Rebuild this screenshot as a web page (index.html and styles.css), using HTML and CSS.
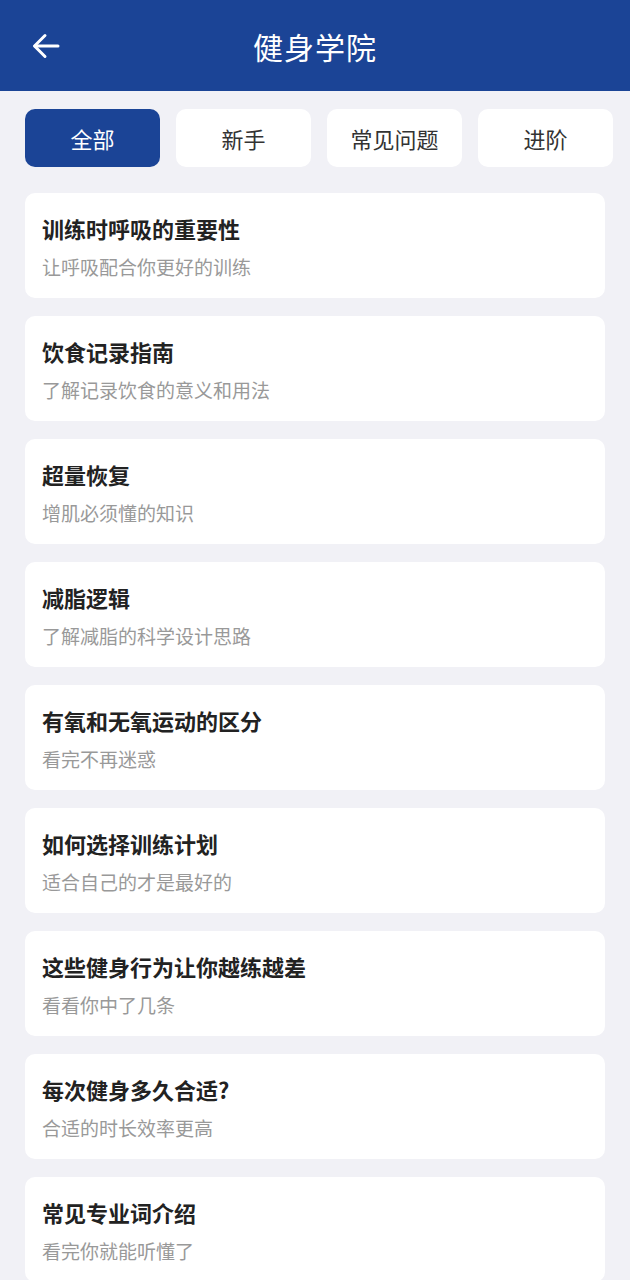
FILE: index.html
```html
<!DOCTYPE html>
<html lang="zh-CN">

<head>
  <meta charset="UTF-8">
  <title>健身学院</title>
  <link rel="stylesheet" href="styles.css">
</head>

<body>
  <header class="top-bar">
    <a class="back-button" href="#">
      <svg width="28" height="28" viewBox="0 0 28 28" fill="none" stroke="#fff" stroke-width="3" stroke-linecap="round" stroke-linejoin="round">
        <path d="M26 14H3"/>
        <path d="M13 3.5L2.5 14L13 24.5"/>
      </svg>
    </a>
    <h1 class="page-title">健身学院</h1>
  </header>

  <nav class="tab-container">
    <button class="tab active">全部</button>
    <button class="tab">新手</button>
    <button class="tab">常见问题</button>
    <button class="tab">进阶</button>
  </nav>

  <div class="article-list">
    <div class="article">
      <div class="article-title">训练时呼吸的重要性</div>
      <div class="article-desc">让呼吸配合你更好的训练</div>
    </div>
    <div class="article">
      <div class="article-title">饮食记录指南</div>
      <div class="article-desc">了解记录饮食的意义和用法</div>
    </div>
    <div class="article">
      <div class="article-title">超量恢复</div>
      <div class="article-desc">增肌必须懂的知识</div>
    </div>
    <div class="article">
      <div class="article-title">减脂逻辑</div>
      <div class="article-desc">了解减脂的科学设计思路</div>
    </div>
    <div class="article">
      <div class="article-title">有氧和无氧运动的区分</div>
      <div class="article-desc">看完不再迷惑</div>
    </div>
    <div class="article">
      <div class="article-title">如何选择训练计划</div>
      <div class="article-desc">适合自己的才是最好的</div>
    </div>
    <div class="article">
      <div class="article-title">这些健身行为让你越练越差</div>
      <div class="article-desc">看看你中了几条</div>
    </div>
    <div class="article">
      <div class="article-title">每次健身多久合适?</div>
      <div class="article-desc">合适的时长效率更高</div>
    </div>
    <div class="article">
      <div class="article-title">常见专业词介绍</div>
      <div class="article-desc">看完你就能听懂了</div>
    </div>
  </div>
</body>

</html>
```

FILE: styles.css
```css
:root {
  --primary-color: #1b4496;
  --bg-color: #f1f1f6;
  --title-color: #222;
  --desc-color: #999;
}

body {
  margin: 0;
  font-family: "Noto Sans CJK SC", "Noto Sans", sans-serif;
  background-color: var(--bg-color);
  color: var(--title-color);
}

.top-bar {
  height: 91px;
  background-color: var(--primary-color);
  display: flex;
  align-items: center;
  justify-content: center;
  position: relative;
}

.back-button {
  position: absolute;
  left: 32px;
  top: 32px;
  display: flex;
}

.page-title {
  margin: 0;
  color: #fff;
  font-size: 30px;
  font-weight: 400;
  letter-spacing: 1px;
}

.tab-container {
  display: flex;
  gap: 16px;
  padding: 18px 17px 0 25px;
}

.tab {
  flex: 1;
  height: 58px;
  border: none;
  border-radius: 10px;
  background-color: #fff;
  color: #333;
  font-family: inherit;
  font-size: 22px;
  cursor: pointer;
}

.tab.active {
  background-color: var(--primary-color);
  color: #fff;
}

.article-list {
  display: flex;
  flex-direction: column;
  gap: 18px;
  padding: 26px 25px 20px;
}

.article {
  background-color: #fff;
  border-radius: 10px;
  padding: 20px 17px 19px;
  height: 66px;
}

.article-title {
  font-size: 22px;
  font-weight: 700;
  line-height: 30px;
  color: var(--title-color);
}

.article-desc {
  margin-top: 12px;
  font-size: 19px;
  line-height: 24px;
  color: var(--desc-color);
}
```
